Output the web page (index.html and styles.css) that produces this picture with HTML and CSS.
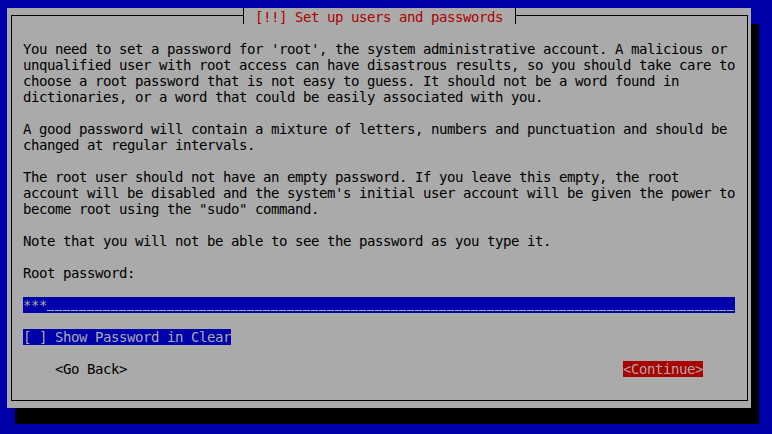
FILE: index.html
```html
<!DOCTYPE html>
<html>
<head>
<meta charset="utf-8">
<link rel="stylesheet" href="styles.css">
</head>
<body>
<div class="screen">
  <div class="dialog">
    <div class="title"><span class="title-text">[!!] Set up users and passwords</span></div>
    <div class="frame">
      <div class="content">
        <p class="para">You need to set a password for 'root', the system administrative account. A malicious or
unqualified user with root access can have disastrous results, so you should take care to
choose a root password that is not easy to guess. It should not be a word found in
dictionaries, or a word that could be easily associated with you.</p>
        <p class="para">A good password will contain a mixture of letters, numbers and punctuation and should be
changed at regular intervals.</p>
        <p class="para">The root user should not have an empty password. If you leave this empty, the root
account will be disabled and the system's initial user account will be given the power to
become root using the "sudo" command.</p>
        <p class="para">Note that you will not be able to see the password as you type it.</p>
        <p class="para">Root password:</p>
        <div class="field"><span class="stars">***</span><span class="blanks"></span></div>
        <div class="check-row"><span class="check">[ ] Show Password in Clear</span></div>
        <div class="buttons">
          <span class="btn">&lt;Go Back&gt;</span>
          <span class="btn btn-active">&lt;Continue&gt;</span>
        </div>
      </div>
    </div>
  </div>
</div>
</body>
</html>
```
FILE: styles.css
```css
html, body {
  margin: 0;
  padding: 0;
}
body {
  background: #0000aa;
  width: 772px;
  height: 434px;
  overflow: hidden;
  font-family: "DejaVu Sans Mono", "Liberation Mono", monospace;
  font-size: 14px;
  letter-spacing: -0.43px;
  line-height: 16px;
  color: #000;
}
.screen {
  padding: 8px 0 0 7px;
}
.dialog {
  position: relative;
  width: 744px;
  height: 400px;
  box-sizing: border-box;
  background: #aaaaaa;
  box-shadow: 8px 16px 0 #000;
  padding: 7px 3px 7px 4px;
}
.frame {
  height: 100%;
  box-sizing: border-box;
  border: 1px solid #000;
}
.title {
  position: absolute;
  left: 236px;
  top: 0;
  height: 16px;
  width: 248px;
  padding: 1px 12px 0 11px;
  box-sizing: content-box;
  height: 15px;
  background: #aaaaaa;
  border-left: 1px solid #000;
  border-right: 1px solid #000;
  color: #aa0000;
  white-space: pre;
}
.content {
  padding: 25px 0 0 11px;
  width: 712px;
}
.para {
  margin: 0 0 16px;
  white-space: pre;
}
.field {
  display: flex;
  width: 712px;
  height: 16px;
  margin-top: 0;
  background: #0000aa;
  color: #aaaaaa;
}
.stars {
  width: 24px;
  flex: none;
  white-space: pre;
}
.blanks {
  flex: 1;
  height: 1px;
  margin-top: 13px;
  background: repeating-linear-gradient(to right, #aaaaaa 0 7px, transparent 7px 8px);
}
.check-row {
  margin-top: 16px;
  height: 16px;
}
.check {
  display: inline-block;
  background: #0000aa;
  color: #aaaaaa;
  width: 208px;
  white-space: pre;
}
.buttons {
  display: flex;
  justify-content: space-between;
  margin-top: 16px;
  padding: 0 32px;
  height: 16px;
}
.btn {
  white-space: pre;
  width: 80px;
}
.btn:first-child {
  width: 72px;
}
.btn-active {
  background: #aa0000;
  color: #aaaaaa;
}
```
